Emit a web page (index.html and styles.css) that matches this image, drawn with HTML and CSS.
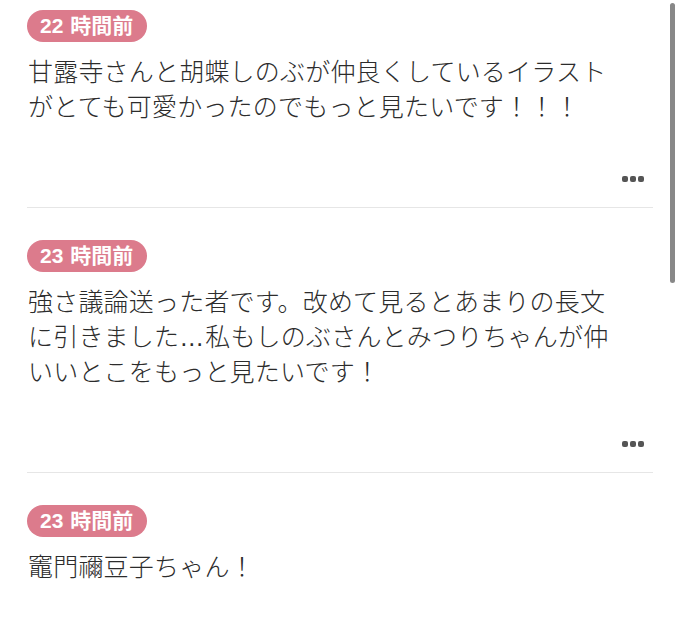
FILE: index.html
```html
<!DOCTYPE html>
<html lang="ja">
<head>
<meta charset="utf-8">
<link rel="stylesheet" href="styles.css">
</head>
<body>
<div class="list">
  <div class="item">
    <span class="badge">22 時間前</span>
    <p class="msg">甘露寺さんと胡蝶しのぶが仲良くしているイラスト<br>がとても可愛かったのでもっと見たいです！！！</p>
    <div class="actions"><span class="more"><i></i><i></i><i></i></span></div>
  </div>
  <div class="item">
    <span class="badge">23 時間前</span>
    <p class="msg">強さ議論送った者です。改めて見るとあまりの長文<br>に引きました<span class="ell">…</span>私もしのぶさんとみつりちゃんが仲<br>いいとこをもっと見たいです！</p>
    <div class="actions"><span class="more"><i></i><i></i><i></i></span></div>
  </div>
  <div class="item">
    <span class="badge">23 時間前</span>
    <p class="msg">竈門禰豆子ちゃん！</p>
    <div class="actions"><span class="more"><i></i><i></i><i></i></span></div>
  </div>
</div>
<div class="scrollbar"></div>
</body>
</html>
```

FILE: styles.css
```css
html, body {
  margin: 0;
  padding: 0;
  background: #fff;
  overflow: hidden;
}
body {
  width: 680px;
  height: 636px;
  position: relative;
  font-family: "Noto Sans CJK JP", "Liberation Sans", sans-serif;
  color: #333;
}
.list {
  padding: 10px 27px 0 27px;
}
.item {
  display: flex;
  flex-direction: column;
  align-items: flex-start;
  border-bottom: 1px solid #e6e6e6;
  padding-top: 32px;
}
.item:first-child {
  padding-top: 0;
}
.badge {
  display: inline-flex;
  align-items: center;
  height: 32px;
  padding: 0 14px 0 13px;
  border-radius: 16px;
  background: #dc7b8c;
  color: #fff;
  font-family: "Liberation Sans", "Noto Sans CJK JP", sans-serif;
  font-weight: bold;
  font-size: 21px;
  line-height: 32px;
  word-spacing: 1px;
}
.msg {
  margin: 11px 0 0 1px;
  font-size: 25px;
  font-weight: 300;
  line-height: 35px;
  letter-spacing: 0.2px;
  color: #2c2c2c;
}
.ell {
  font-family: "Liberation Sans", sans-serif;
  letter-spacing: 1px;
  line-height: 1;
}
.actions {
  align-self: stretch;
  display: flex;
  justify-content: flex-end;
  align-items: center;
  height: 20px;
  margin-top: 46px;
  margin-bottom: 18px;
  padding-right: 9px;
}
.more {
  display: flex;
  gap: 2px;
}
.more i {
  display: block;
  width: 6px;
  height: 6px;
  border-radius: 2px;
  background: #555;
}
.scrollbar {
  position: absolute;
  left: 670px;
  top: 3px;
  width: 5px;
  height: 280px;
  border-radius: 3px;
  background: #888;
}
```
